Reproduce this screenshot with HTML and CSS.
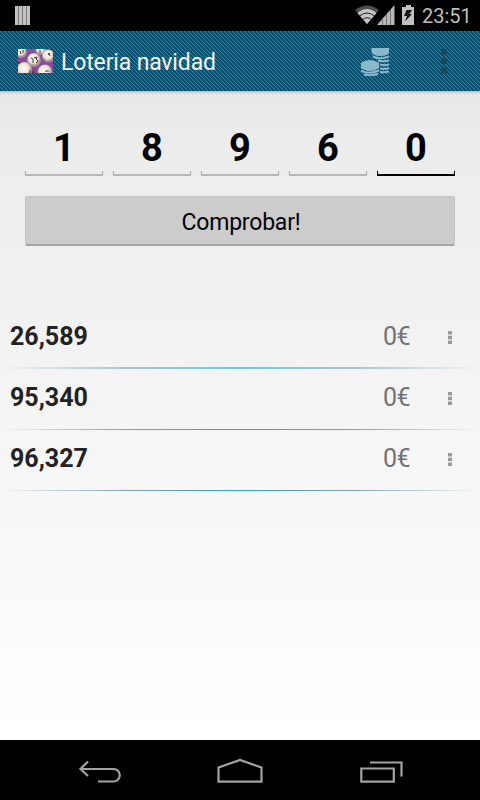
FILE: index.html
```html
<!DOCTYPE html>
<html lang="es">
    <head>
        <meta charset="UTF-8">
        <title>Loteria navidad</title>
        <link rel="stylesheet" href="styles.css">
    </head>

    <body>
        <div class="status">
            <svg class="bars" width="15" height="19">
                <rect width="15" height="19" fill="#777"/>
                <path d="M1.5 0v19M5.5 0v19M9.5 0v19M13.5 0v19" stroke="#c2c2c2" stroke-width="3"/>
            </svg>
            <svg class="signals" width="60" height="20">
                <path d="M0 5Q12-4 24 5L12 19z" fill="#4d4d4d"/>
                <path d="M2.500 8Q12 0 21.500 8L12 19z" fill="#c4c4c4"/>
                <path d="M4.500 11Q12 5 19.500 11M7.500 14.500Q12 11 16.500 14.500" fill="none" stroke="#222" stroke-width="1"/>
                <path d="M22 20L39.500 0V20z" fill="#b8b8b8"/>
                <path d="M27.500 13v7M31.500 9v11M35.500 5v15" stroke="#777" stroke-width="1"/>
                <path d="M47 2h4V0h5v2h3v18H47z" fill="#c2c2c2"/>
                <path d="M51.500 5H57L54.500 9H57L50 16.500L52 11H49z" fill="#111"/>
            </svg>
            <span class="clock">23:51</span>
        </div>

        <div class="header">
            <svg class="logo" width="35" height="24" viewBox="0 0 35 24">
                <defs>
                    <radialGradient id="ball" cx="45%" cy="40%">
                        <stop offset="0" stop-color="#fffff4"/>
                        <stop offset=".65" stop-color="#e9e4d5"/>
                        <stop offset="1" stop-color="#a28b91"/>
                    </radialGradient>
                </defs>
                <rect width="35" height="24" fill="#8b4aa0"/>
                <path d="M0 13L12 15L17 24H0zM29 0h6v4z" fill="#57334e"/>
                <circle cx="3" cy="3" r="6" fill="url(#ball)"/>
                <circle cx="22.500" cy="1" r="5" fill="url(#ball)"/>
                <circle cx="30.500" cy="7" r="6.500" fill="url(#ball)"/>
                <circle cx="16" cy="11" r="7" fill="url(#ball)"/>
                <circle cx="6.500" cy="21" r="8" fill="url(#ball)"/>
                <circle cx="27" cy="23" r="7.500" fill="url(#ball)"/>
                <path d="M13 9l2 1v4M16 9l3-1-1 2 2 2-2 2M2 2l1 3M5 1v3M22 1v3M30 6l1-2 1 3M27 22h4M12 21v3" fill="none" stroke="#39343a" stroke-width="1"/>
            </svg>
            <span class="title">Loteria navidad</span>
            <svg class="coins" width="28" height="29" viewBox="0 0 28 29">
                <g fill="#8bb8ca">
                    <path d="M10.500 1H28V6Q26 9 19 9T10.500 5z"/>
                    <ellipse cx="9" cy="18.500" rx="9" ry="5.500"/>
                    <path d="M0 15.500h4v6H0zM14 15.500h4v6h-4z"/>
                </g>
                <path d="M12 9.500Q19 13 28 9.500M17 13.500Q23 15 28 13.500M19 17.500Q24 19 28 17.500M19 21.500Q24 22.500 28 21M19 25Q24 25.500 28 24.500M0 23.500Q8 28 18 23.500M3 27.500Q9 29 17 27" fill="none" stroke="#8bb8ca" stroke-width="2"/>
            </svg>
            <svg class="more" width="6" height="25">
                <path d="M0 0h6v6H0zM0 9h6v6H0zM0 18.500h6v6H0z" fill="#1d4556"/>
            </svg>
        </div>

        <div class="content">
            <div class="digits">
                <div class="digit">1</div>
                <div class="digit">8</div>
                <div class="digit">9</div>
                <div class="digit">6</div>
                <div class="digit focused">0</div>
            </div>
            <button class="check">Comprobar!</button>

            <div class="list">
                <div class="row soft">
                    <span class="number">26,589</span>
                    <span class="prize">0€</span>
                    <svg class="dots" width="4" height="13"><path d="M0 0h4v3.500H0zM0 4.700h4v3.500H0zM0 9.400h4v3.500H0z" fill="#9a9a9a"/></svg>
                </div>
                <div class="row">
                    <span class="number">95,340</span>
                    <span class="prize">0€</span>
                    <svg class="dots" width="4" height="13"><path d="M0 0h4v3.500H0zM0 4.700h4v3.500H0zM0 9.400h4v3.500H0z" fill="#9a9a9a"/></svg>
                </div>
                <div class="row">
                    <span class="number">96,327</span>
                    <span class="prize">0€</span>
                    <svg class="dots" width="4" height="13"><path d="M0 0h4v3.500H0zM0 4.700h4v3.500H0zM0 9.400h4v3.500H0z" fill="#9a9a9a"/></svg>
                </div>
            </div>
        </div>

        <div class="navbar">
            <svg width="480" height="60" fill="none" stroke="#a3a3a3" stroke-width="2.200">
                <path d="M88 21.500L80.500 29L88 36M81 29h32.500a6.200 6.200 0 0 1 0 12.500H98"/>
                <path d="M218.500 41.700V27.500L240 20L261.500 27.500V41.700z"/>
                <path d="M361.300 28.500h32.500v13.200h-32.500zM370 22.500h31.500V36.500"/>
            </svg>
        </div>
    </body>
</html>
```
FILE: styles.css
```css
body{margin:0; width:480px; height:800px; overflow:hidden; display:flex; flex-direction:column; font-family:Roboto,"Liberation Sans",sans-serif;}
svg{display:block; flex:none;}

.status{height:31px; background:#000; display:flex; align-items:flex-start; box-sizing:border-box; padding:5px 9px 0 15px;}
.bars{margin-top:1px;}
.signals{margin-left:auto;}
.clock{color:#bebebe; font-size:20px; line-height:23px; margin-left:7px; width:49px; white-space:nowrap;}

.header{
height:60px;
display:flex;
align-items:center;
box-sizing:border-box;
padding:0 33px 0 18px;
background:linear-gradient(45deg, #02506f 36%, #3f7f97 50%, #02506f 64%) 0 0 / 4px 4px;
}
.title{color:#f3f3f3; font-size:23px; letter-spacing:-0.150px; margin-left:8px; padding-top:2px; white-space:nowrap;}
.coins{margin-left:auto; margin-right:52px;}

.content{
flex:1;
box-sizing:border-box;
padding-top:32px;
background:linear-gradient(#bdbdbd 0, #dadada 2px, #e8e8e8 4px, #ebebeb 20px, #f2f2f2 240px, #fff 100%);
}
.digits{display:flex; gap:10px; padding:0 25px; height:53px;}
.digit{
flex:1;
position:relative;
text-align:center;
font-size:38px;
font-weight:bold;
line-height:51px;
color:#000;
border-bottom:2px solid #b9b9b9;
box-sizing:border-box;
}
.digit::before,.digit::after{content:""; position:absolute; bottom:0; width:1px; height:3px; background:#a8a8a8;}
.digit::before{left:0;}
.digit::after{right:0;}
.digit.focused{border-color:#000;}
.focused::before,.focused::after{background:#000;}

.check{
display:block;
width:430px;
height:50px;
margin:20px 25px 0;
border:1px solid #c3c3c3;
border-bottom:2px solid #a3a3a3;
border-radius:2px;
background:#ccc;
color:#000;
font-family:inherit;
font-size:23px;
letter-spacing:-0.200px;
padding:3px 0 0 2px;
}

.list{margin-top:62px;}
.row{
height:61px;
box-sizing:border-box;
display:flex;
align-items:center;
padding:0 28px 4px 10px;
background:linear-gradient(90deg, rgba(120,150,160,0), #7fa3b0 26%, #1badd6 50%, #7fa3b0 74%, rgba(120,150,160,0)) no-repeat 0 100% / 100% 1px;
}
.soft{background:linear-gradient(90deg, rgba(120,150,160,0), #a9c3cd 26%, #74c8e4 50%, #a9c3cd 74%, rgba(120,150,160,0)) no-repeat 0 100% / 100% 2px;}
.number{font-size:25px; font-weight:bold; color:#222;}
.prize{font-size:25px; letter-spacing:-0.500px; color:#737373; margin-left:auto; margin-right:38px;}
.dots{margin-top:2px;}

.navbar{height:60px; background:#000;}
```
